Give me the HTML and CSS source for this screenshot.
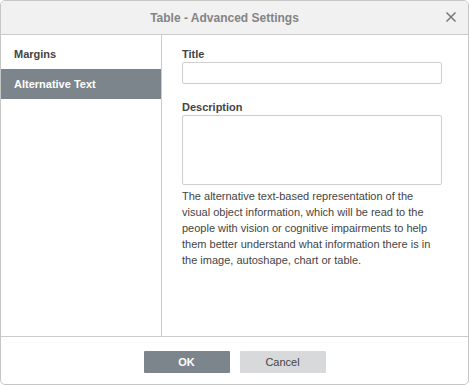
FILE: index.html
```html
<!DOCTYPE html>
<html lang="en">
<head>
  <meta charset="UTF-8" />
  <title>Table - Advanced Settings</title>
  <link rel="stylesheet" href="styles.css">
</head>
<body>
  <div class="dialog">
    <div class="header">
      <span class="header-title">Table - Advanced Settings</span>
      <span class="close">
        <svg width="12" height="12" viewBox="0 0 12 12">
          <path d="M1.5 1.5 L10.5 10.5 M10.5 1.5 L1.5 10.5" stroke="#777" stroke-width="1.5" fill="none" />
        </svg>
      </span>
    </div>

    <div class="body">
      <div class="sidebar">
        <div class="tab">Margins</div>
        <div class="tab active">Alternative Text</div>
      </div>

      <div class="content">
        <label class="field-label" for="altTitle">Title</label>
        <input type="text" id="altTitle" class="field-input" />

        <label class="field-label desc-label" for="altDesc">Description</label>
        <textarea id="altDesc" class="field-area"></textarea>

        <p class="hint">The alternative text-based representation of the visual object information, which will be read to the people with vision or cognitive impairments to help them better understand what information there is in the image, autoshape, chart or table.</p>
      </div>
    </div>

    <div class="footer">
      <button class="btn primary">OK</button>
      <button class="btn">Cancel</button>
    </div>
  </div>
</body>
</html>
```

FILE: styles.css
```css
* {
  box-sizing: border-box;
}

body {
  margin: 0;
  font-family: 'Liberation Sans', Arial, sans-serif;
  font-size: 11px;
  color: #444;
  background: white;
}

.dialog {
  width: 469px;
  height: 385px;
  border: 1px solid #c6c6c6;
  border-radius: 5px;
  display: flex;
  flex-direction: column;
  overflow: hidden;
  background: white;
}

.header {
  height: 34px;
  flex: none;
  background: #f1f1f1;
  border-bottom: 1px solid #cbcbcb;
  display: flex;
  align-items: center;
  justify-content: center;
  padding-right: 20px;
  position: relative;
}

.header-title {
  font-size: 12px;
  font-weight: bold;
  color: #848484;
}

.close {
  position: absolute;
  right: 11px;
  top: 10px;
  width: 12px;
  height: 12px;
  display: flex;
}

.body {
  height: 302px;
  flex: none;
  display: flex;
  border-bottom: 1px solid #cbcbcb;
}

.sidebar {
  width: 161px;
  flex: none;
  border-right: 1px solid #cbcbcb;
  padding-top: 4px;
}

.tab {
  height: 30px;
  line-height: 30px;
  padding-left: 13px;
  font-weight: bold;
  color: #444;
}

.tab.active {
  background: #7d858c;
  color: white;
}

.content {
  flex: 1;
  padding: 12px 0 0 20px;
  display: flex;
  flex-direction: column;
}

.field-label {
  display: block;
  font-weight: bold;
  line-height: 14px;
  margin-bottom: 1px;
}

.desc-label {
  margin-top: 16px;
}

.field-input, .field-area {
  width: 260px;
  border: 1px solid #cfcfcf;
  border-radius: 2px;
  font-family: inherit;
  font-size: 11px;
  margin: 0;
  padding: 2px 4px;
}

.field-input {
  height: 22px;
}

.field-area {
  height: 70px;
  resize: none;
}

.hint {
  width: 262px;
  margin: 3px 0 0;
  line-height: 16px;
  color: #444;
}

.footer {
  flex: 1;
  display: flex;
  justify-content: center;
  align-items: flex-start;
  gap: 10px;
  padding-top: 14px;
}

.btn {
  width: 86px;
  height: 22px;
  border: none;
  border-radius: 1px;
  background: #d8d9db;
  color: #444;
  font-family: inherit;
  font-size: 11px;
  cursor: pointer;
}

.btn.primary {
  background: #7d858c;
  color: white;
  font-weight: bold;
}
```
